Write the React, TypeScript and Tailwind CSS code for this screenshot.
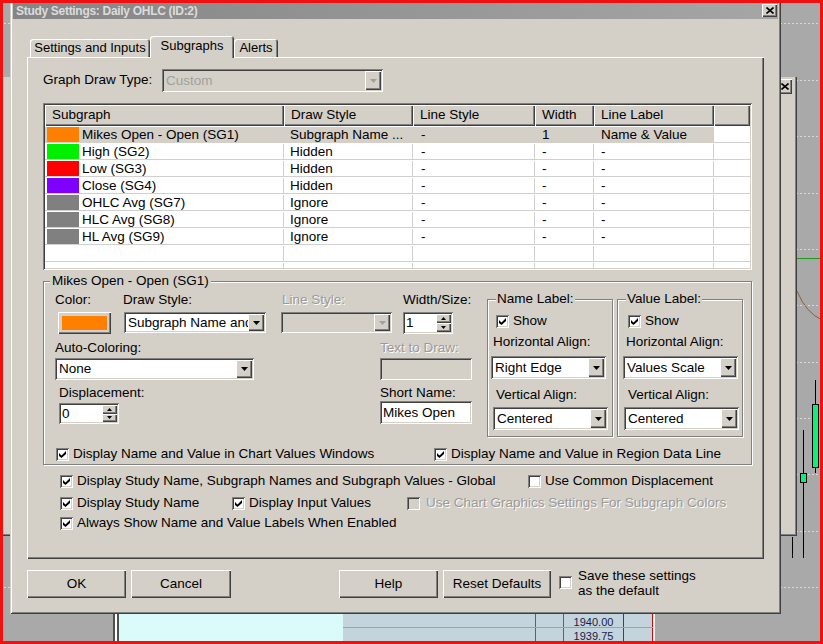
import React from 'react';

const BG = 'bg-[#d4d0c8]';
const sunken = 'shadow-[inset_1px_1px_0_#808080,inset_-1px_-1px_0_#ffffff,inset_2px_2px_0_#404040,inset_-2px_-2px_0_#d4d0c8]';
const raised = 'shadow-[inset_1px_1px_0_#ffffff,inset_-1px_-1px_0_#404040,inset_-2px_-2px_0_#808080]';
const etched = 'border border-[#808080] shadow-[inset_1px_1px_0_#ffffff,1px_1px_0_#ffffff]';
const dim = 'text-[#9a9a9a] [text-shadow:1px_1px_0_#ffffff]';
const tabSh = 'rounded-t-[3px] shadow-[inset_1px_1px_0_#ffffff,inset_-1px_0_0_#404040,inset_-2px_0_0_#808080]';

const Arrow = ({ up, small, dis }: { up?: boolean; small?: boolean; dis?: boolean }) => {
  const w = small ? 5 : 7;
  const h = small ? 3 : 4;
  return (
    <svg width={w} height={h} viewBox={`0 0 ${w} ${h}`}>
      <path d={up ? `M0 ${h}H${w}L${w / 2} 0z` : `M0 0H${w}L${w / 2} ${h}z`} fill={dis ? '#a0a0a0' : '#000'} />
    </svg>
  );
};

const Combo = ({ value, className = '', dis = false }: { value?: string; className?: string; dis?: boolean }) => (
  <div className={`flex p-[2px] ${sunken} ${dis ? BG : 'bg-white'} ${className}`}>
    <div className={`flex-1 min-w-0 overflow-hidden whitespace-nowrap pl-[2px] self-center leading-[16px] ${dis ? 'text-[#a0a0a0]' : ''}`}>{value}</div>
    <div className={`w-[16px] shrink-0 flex items-center justify-center ${BG} ${raised}`}>
      <Arrow dis={dis} />
    </div>
  </div>
);

const Spin = ({ value, className = '' }: { value: string; className?: string }) => (
  <div className={`flex p-[2px] bg-white ${sunken} ${className}`}>
    <div className="flex-1 pl-[1px] self-center leading-[16px]">{value}</div>
    <div className="flex flex-col w-[15px] shrink-0">
      <div className={`flex-1 flex items-center justify-center ${BG} ${raised}`}><Arrow up small /></div>
      <div className={`flex-1 flex items-center justify-center ${BG} ${raised}`}><Arrow small /></div>
    </div>
  </div>
);

const Edit = ({ value = '', className = '', dis = false }: { value?: string; className?: string; dis?: boolean }) => (
  <div className={`flex items-center p-[2px] pl-[3px] leading-[16px] ${sunken} ${dis ? BG : 'bg-white'} ${className}`}>{value}</div>
);

const Check = ({ on = true, dis = false }: { on?: boolean; dis?: boolean }) => (
  <span className={`w-[13px] h-[13px] shrink-0 flex items-center justify-center ${sunken} ${dis ? BG : 'bg-white'}`}>
    {on && (
      <svg width="7" height="7" viewBox="0 0 7 7">
        <path d="M0 2L2.5 4.5L7 0V3L2.5 7L0 5Z" fill="#000" />
      </svg>
    )}
  </span>
);

const CheckItem = ({ label, on = true, dis = false, className = '' }: { label: string; on?: boolean; dis?: boolean; className?: string }) => (
  <div className={`flex items-center gap-[4px] ${className}`}>
    <Check on={on} dis={dis} />
    <span className={`leading-[16px] whitespace-nowrap ${dis ? dim : ''}`}>{label}</span>
  </div>
);

const Btn = ({ children, className = '' }: { children?: React.ReactNode; className?: string }) => (
  <div className={`flex items-center justify-center ${BG} ${raised} ${className}`}>{children}</div>
);

const CloseX = ({ className = '' }: { className?: string }) => (
  <Btn className={className}>
    <svg width="8" height="7" viewBox="0 0 8 7">
      <path d="M0.5 0.5L7.5 6.5M7.5 0.5L0.5 6.5" stroke="#000" strokeWidth="1.6" />
    </svg>
  </Btn>
);

const cols = ['w-[239px]', 'w-[129px]', 'w-[122px]', 'w-[59px]', 'w-[120px]'];
const heads = ['Subgraph', 'Draw Style', 'Line Style', 'Width', 'Line Label'];

const rows = [
  { c: 'bg-[#ff8000]', n: 'Mikes Open - Open (SG1)', s: 'Subgraph Name ...', l: '-', w: '1', lb: 'Name & Value', sel: true },
  { c: 'bg-[#00f000]', n: 'High (SG2)', s: 'Hidden', l: '-', w: '-', lb: '-' },
  { c: 'bg-[#ff0000]', n: 'Low (SG3)', s: 'Hidden', l: '-', w: '-', lb: '-' },
  { c: 'bg-[#8000ff]', n: 'Close (SG4)', s: 'Hidden', l: '-', w: '-', lb: '-' },
  { c: 'bg-[#808080]', n: 'OHLC Avg (SG7)', s: 'Ignore', l: '-', w: '-', lb: '-' },
  { c: 'bg-[#808080]', n: 'HLC Avg (SG8)', s: 'Ignore', l: '-', w: '-', lb: '-' },
  { c: 'bg-[#808080]', n: 'HL Avg (SG9)', s: 'Ignore', l: '-', w: '-', lb: '-' },
  { c: '', n: '', s: '', l: '', w: '', lb: '' },
  { c: '', n: '', s: '', l: '', w: '', lb: '' },
];

const SubgraphTable = () => (
  <div className={`mt-[11px] w-[709px] h-[167px] p-[2px] bg-white ${sunken}`}>
    <div className="h-full overflow-hidden">
      <div className="flex h-[21px]">
        {heads.map((h, i) => (
          <div key={h} className={`${cols[i]} shrink-0 flex items-center pl-[7px] ${BG} ${raised}`}>{h}</div>
        ))}
        <div className={`flex-1 ${BG} ${raised}`} />
      </div>
      {rows.map((r, i) => {
        const cell = `shrink-0 flex items-center border-r border-b ${r.sel ? 'bg-[#d4d0c8] border-r-[#d4d0c8] border-b-[#d4d0c8]' : 'border-[#d0d0d0]'}`;
        return (
          <div key={i} className="flex h-[17px] pt-px leading-[16px] whitespace-nowrap">
            <div className={`${cols[0]} ${cell}`}>
              {r.c && <div className={`ml-[2px] w-[32px] h-full ${r.c}`} />}
              <span className="pl-[3px]">{r.n}</span>
            </div>
            <div className={`${cols[1]} ${cell} pl-[6px]`}>{r.s}</div>
            <div className={`${cols[2]} ${cell} pl-[8px]`}>{r.l}</div>
            <div className={`${cols[3]} ${cell} pl-[7px]`}>{r.w}</div>
            <div className={`${cols[4]} ${cell} pl-[7px]`}>{r.lb}</div>
            <div className="flex-1 border-b border-[#d0d0d0]" />
          </div>
        );
      })}
    </div>
  </div>
);

type Offs = { leg: string; chk: string; h: string; hc: string; v: string; vc: string };

const LabelBox = ({ title, hAlign, o, className = '' }: { title: string; hAlign: string; o: Offs; className?: string }) => (
  <div className={`relative mt-[17px] w-[126px] h-[138px] ${etched} ${className}`}>
    <span className={`absolute top-[-9px] px-[1px] leading-[16px] ${BG} ${o.leg}`}>{title}</span>
    <div className="pt-[13px]">
      <CheckItem label="Show" className={o.chk} />
      <div className={`mt-[5px] leading-[16px] ${o.h}`}>Horizontal Align:</div>
      <Combo value={hAlign} className={`mt-[6px] w-[115px] h-[23px] ${o.hc}`} />
      <div className={`mt-[8px] leading-[16px] ${o.v}`}>Vertical Align:</div>
      <Combo value="Centered" className={`mt-[4px] w-[115px] h-[23px] ${o.vc}`} />
    </div>
  </div>
);

const GroupBox = () => (
  <div className={`relative mt-[11px] w-[709px] h-[184px] ${etched}`}>
    <span className={`absolute left-[6px] top-[-9px] px-[2px] leading-[16px] ${BG}`}>Mikes Open - Open (SG1)</span>
    <div className="flex">
      <div className="w-[443px] pl-[11px] pt-[10px]">
        <div className="flex">
          <div className="w-[68px]">
            <div className="leading-[16px]">Color:</div>
            <Btn className="ml-[3px] mt-[4px] w-[53px] h-[22px] p-[4px]">
              <div className="w-full h-full bg-[#ff8000]" />
            </Btn>
          </div>
          <div className="w-[158px]">
            <div className="leading-[16px]">Draw Style:</div>
            <Combo value="Subgraph Name and Value" className="ml-[1px] mt-[4px] w-[142px] h-[21px]" />
          </div>
          <div className="w-[122px]">
            <div className={`leading-[16px] pl-[1px] ${dim}`}>Line Style:</div>
            <Combo dis className="mt-[4px] w-[111px] h-[21px]" />
          </div>
          <div>
            <div className="leading-[16px]">Width/Size:</div>
            <Spin value="1" className="mt-[4px] w-[50px] h-[22px]" />
          </div>
        </div>
        <div className="flex mt-[6px]">
          <div className="w-[325px]">
            <div className="leading-[16px]">Auto-Coloring:</div>
            <Combo value="None" className="mt-[2px] w-[199px] h-[22px]" />
          </div>
          <div>
            <div className={`leading-[16px] ${dim}`}>Text to Draw:</div>
            <Edit dis className="mt-[2px] w-[92px] h-[22px]" />
          </div>
        </div>
        <div className="flex mt-[5px]">
          <div className="w-[325px] pl-[4px]">
            <div className="leading-[16px]">Displacement:</div>
            <Spin value="0" className="mt-[2px] w-[60px] h-[21px]" />
          </div>
          <div>
            <div className="leading-[16px]">Short Name:</div>
            <Edit value="Mikes Open" className="w-[92px] h-[23px]" />
          </div>
        </div>
      </div>
      <LabelBox
        title="Name Label:"
        hAlign="Right Edge"
        o={{ leg: 'left-[8px]', chk: 'pl-[8px]', h: 'pl-[5px]', hc: 'ml-[3px]', v: 'pl-[8px]', vc: 'ml-[5px]' }}
      />
      <LabelBox
        title="Value Label:"
        hAlign="Values Scale"
        className="ml-[4px]"
        o={{ leg: 'left-[8px]', chk: 'pl-[10px]', h: 'pl-[8px]', hc: 'ml-[5px]', v: 'pl-[10px]', vc: 'ml-[6px]' }}
      />
    </div>
    <div className="flex mt-[9px]">
      <CheckItem label="Display Name and Value in Chart Values Windows" className="ml-[12px] w-[378px]" />
      <CheckItem label="Display Name and Value in Region Data Line" />
    </div>
  </div>
);

const Chart = () => {
  const grid = [23, 80, 136, 193, 249, 305, 362, 418, 474, 531, 587];
  return (
    <svg className="absolute left-0 top-0" width="823" height="644">
      {grid.map((y) => (
        <line key={y} x1="0" x2="823" y1={y + 0.5} y2={y + 0.5} stroke="#d8d8d8" strokeDasharray="2 2" />
      ))}
      <line x1="781" x2="823" y1="258.5" y2="258.5" stroke="#1f9a1f" />
      <path d="M797 291 Q806 313 822 320" stroke="#8b5e3c" fill="none" />
      <line x1="792.5" x2="792.5" y1="537" y2="558" stroke="#000" />
      <line x1="803.5" x2="803.5" y1="430" y2="558" stroke="#000" />
      <rect x="800.5" y="473.5" width="6" height="9" fill="#10ee78" stroke="#000" />
      <line x1="815.5" x2="815.5" y1="380" y2="473" stroke="#000" />
      <rect x="812.5" y="404.5" width="6" height="63" fill="#10ee78" stroke="#000" />
    </svg>
  );
};

const BottomStrip = () => (
  <div className="absolute left-0 top-[600px] w-[823px] h-[44px] flex">
    <div className="w-[113px] bg-[#a9a9a9]" />
    <div className="w-[2px] bg-[#505050]" />
    <div className="w-[2px] bg-white" />
    <div className="w-[2px] bg-[#505050]" />
    <div className="w-[224px] bg-[#dbfbfb]" />
    <div className="relative flex bg-[#c4d4dc]">
      <div className="absolute left-0 right-0 top-[27px] h-px bg-[#93a6b2]" />
      <div className="w-[192px]" />
      <div className="w-px bg-[#109a10]" />
      <div className="w-[27px]" />
      <div className="w-px bg-[#109a10]" />
      <div className="w-[59px] pt-[15px] flex flex-col items-center text-[11px] leading-[14px] text-[#1a1a48]">
        <span>1940.00</span>
        <span>1939.75</span>
      </div>
      <div className="w-px bg-[#e00000]" />
      <div className="w-[28px]" />
      <div className="w-px bg-[#e00000]" />
    </div>
    <div className="w-[2px] bg-white" />
    <div className="flex-1 bg-[#a9a9a9]" />
  </div>
);

const App: React.FC = () => {
  return (
    <div className="relative w-[823px] h-[644px] overflow-hidden bg-[#a9a9a9] font-['Liberation_Sans',Arial,sans-serif] text-[13.5px] text-black">
      <Chart />
      <BottomStrip />

      {/* window behind the dialog */}
      <div className={`absolute left-[-10px] top-[77px] w-[807px] h-[459px] ${BG} shadow-[inset_-1px_-1px_0_#404040,inset_-2px_-2px_0_#808080]`}>
        <CloseX className="absolute left-[787px] top-[2px] w-[15px] h-[15px]" />
      </div>

      <div className={`absolute left-[10px] top-[-1px] w-[771px] h-[615px] p-[3px] flex flex-col ${BG} shadow-[inset_1px_1px_0_#d4d0c8,inset_-1px_-1px_0_#404040,inset_2px_2px_0_#ffffff,inset_-2px_-2px_0_#808080]`}>
        <div className="h-[17px] flex items-center justify-between pl-[3px] pr-[1px] bg-linear-to-r from-[#858585] to-[#a6a6a6]">
          <span className="text-[12px] font-bold tracking-[-0.3px] text-[#dcdcdc] leading-[14px]">Study Settings: Daily OHLC (ID:2)</span>
          <CloseX className="w-[15px] h-[13px]" />
        </div>

        <div className="mt-[17px] flex items-end h-[21px] pl-[17px] text-[13px]">
          <div className={`w-[120px] h-[18px] flex items-center justify-center ${tabSh}`}>Settings and Inputs</div>
          <div className={`relative z-10 w-[84px] h-[22px] -mb-px pb-[2px] flex items-center justify-center ${BG} ${tabSh}`}>Subgraphs</div>
          <div className={`w-[44px] h-[18px] flex items-center justify-center ${tabSh}`}>Alerts</div>
        </div>

        <div className="ml-[14px] w-[737px] h-[502px] pl-[16px] pt-[12px] shadow-[inset_1px_1px_0_#ffffff,inset_-1px_-1px_0_#404040,inset_-2px_-2px_0_#808080]">
          <div className="flex items-center h-[23px]">
            <span className="w-[119px]">Graph Draw Type:</span>
            <Combo dis value="Custom" className="w-[221px] h-[23px]" />
          </div>

          <SubgraphTable />
          <GroupBox />

          <div className="flex items-center mt-[7px] h-[18px] pl-[17px]">
            <CheckItem label="Display Study Name, Subgraph Names and Subgraph Values - Global" className="w-[468px]" />
            <CheckItem label="Use Common Displacement" on={false} />
          </div>
          <div className="flex items-center mt-[4px] h-[18px] pl-[17px]">
            <CheckItem label="Display Study Name" className="w-[172px]" />
            <CheckItem label="Display Input Values" className="w-[175px]" />
            <CheckItem label="Use Chart Graphics Settings For Subgraph Colors" on={false} dis className="gap-[6px]" />
          </div>
          <div className="flex items-center mt-[2px] h-[18px] pl-[17px]">
            <CheckItem label="Always Show Name and Value Labels When Enabled" />
          </div>
        </div>

        <div className="flex items-start mt-[11px] ml-[14px]">
          <Btn className="w-[99px] h-[28px]">OK</Btn>
          <Btn className="ml-[5px] w-[100px] h-[28px]">Cancel</Btn>
          <Btn className="ml-[108px] w-[99px] h-[28px]">Help</Btn>
          <Btn className="ml-[5px] w-[108px] h-[28px]">Reset Defaults</Btn>
          <div className="ml-[8px] mt-[6px]">
            <Check on={false} />
          </div>
          <div className="ml-[6px] -mt-[2px] leading-[15px]">
            Save these settings
            <br />
            as the default
          </div>
        </div>
      </div>

      <div className="pointer-events-none absolute inset-0 border-[3px] border-[#f01010]" />
    </div>
  );
};

export default App;
